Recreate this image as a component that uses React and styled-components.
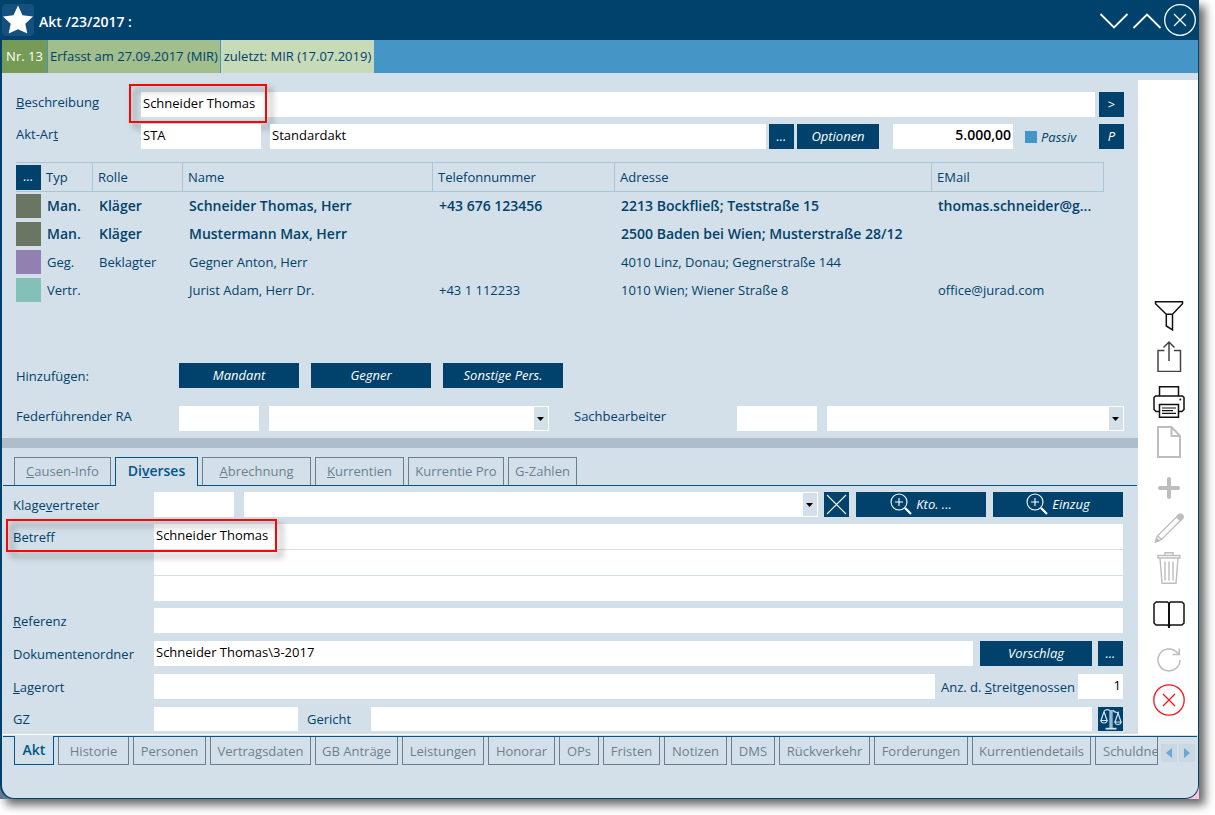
import React from 'react';
import styled, { createGlobalStyle, css } from 'styled-components';

const c = {
  navy: '#00426b',
  panel: '#d4e0e9',
  strip: '#4596c6',
  line: '#00568a',
  grid: '#abc5d6',
  tab: '#6b808f',
  splitter: '#aebdcb',
};

const GlobalStyle = createGlobalStyle`
  *, *::before, *::after { box-sizing: border-box; }
  body { margin: 0; background: #fff; }
  body, button, input, select {
    font-family: "Open Sans", "Noto Sans", sans-serif;
    font-size: 13px;
    line-height: 18px;
    color: ${c.navy};
  }
`;

const strong = css`
  font-size: 14px;
  font-weight: 600;
`;

const Desktop = styled.div`
  padding: 0 16px 16px 0;
  overflow: hidden;
`;

const Shadow = styled.div`
  box-shadow: 6px 6px 9px rgba(0, 0, 0, 0.6);
  background: linear-gradient(to right, #5f7a92 50%, #fcc4e0 50%);
`;

const Window = styled.main`
  display: flex;
  flex-direction: column;
  min-height: calc(100vh - 16px);
  background: ${c.panel};
  border: solid ${c.navy};
  border-width: 0 1px 1px 2px;
  border-radius: 0 0 14px 14px;
  overflow: hidden;
`;

const TitleBar = styled.header`
  display: flex;
  align-items: center;
  height: 40px;
  padding-right: 2px;
  gap: 1px;
  background: ${c.navy};
`;

const StarBox = styled.span`
  display: flex;
  width: 32px;
  height: 32px;
  border-radius: 4px;
  background: #14517e;
`;

const Title = styled.h1`
  flex: 1;
  margin: 0;
  padding: 4px 0 0 4px;
  line-height: 18px;
  color: #fff;
  ${strong}
`;

const IconButton = styled.button`
  display: flex;
  width: 32px;
  height: 32px;
  padding: 0;
  border: 0;
  background: none;
`;

const InfoStrip = styled.div`
  display: flex;
  gap: 1px;
  height: 33px;
  background: ${c.strip};
`;

const InfoCell = styled.span`
  display: flex;
  align-items: center;
  justify-content: center;
  width: ${(p) => p.$w}px;
  padding-bottom: 2px;
  background: ${(p) => p.$bg};
  color: ${(p) => p.$color || c.navy};
  white-space: nowrap;
`;

const Body = styled.div`
  display: flex;
  flex: 1;
`;

const Content = styled.div`
  display: flex;
  flex-direction: column;
  flex: 1;
  min-width: 0;
`;

const UpperPane = styled.section`
  display: flex;
  flex-direction: column;
  flex: 1;
  padding: 19px 14px 7px;
`;

const LowerPane = styled.section`
  padding: 6px 15px 3px 11px;
`;

const Stack = styled.div`
  display: flex;
  flex-direction: column;
  gap: ${(p) => p.$gap}px;
  margin-top: ${(p) => p.$top || 0}px;
`;

const Row = styled.div`
  display: flex;
  position: relative;
  gap: ${(p) => p.$gap || 0}px;
  min-height: ${(p) => p.$h || 25}px;
`;

const Label = styled.label`
  display: flex;
  align-items: center;
  flex: none;
  width: ${(p) => p.$w}px;
  padding-bottom: ${(p) => (p.$raised ? 6 : 0)}px;
  padding-left: ${(p) => p.$pad || 0}px;
  white-space: pre;
`;

const Field = styled.input`
  ${(p) => (p.$w ? css`flex: none; width: ${p.$w}px;` : css`flex: 1; width: 0;`)}
  min-width: 0;
  padding: 0 2px 4px;
  border: 0;
  border-radius: 0;
  background: #fff;
  color: #000;
  text-align: ${(p) => (p.$right ? 'right' : 'left')};
  ${(p) => p.$bold && strong}
`;

const FieldHolder = styled.div`
  display: flex;
  flex: 1;
  position: relative;
`;

const SelectBox = styled.div`
  display: flex;
  position: relative;
  ${(p) => (p.$w ? css`flex: none; width: ${p.$w}px;` : css`flex: 1;`)}
  border: 1px solid #fff;
  background: #fff;
`;

const Select = styled.select`
  flex: 1;
  appearance: none;
  border: 0;
  background: #fff;
  color: #000;
`;

const Arrow = styled.span`
  display: flex;
  align-items: center;
  justify-content: center;
  position: absolute;
  top: 0;
  right: 0;
  bottom: 0;
  width: 14px;
  padding-right: 1px;
  background: ${c.panel};
  pointer-events: none;
`;

const Button = styled.button`
  display: flex;
  align-items: center;
  justify-content: center;
  flex: none;
  gap: 4px;
  width: ${(p) => p.$w || 25}px;
  min-height: ${(p) => p.$h || 25}px;
  padding: 0 0 ${(p) => (p.$icon ? 0 : 2)}px;
  border: 0;
  background: ${c.navy};
  color: #fff;
  font-style: ${(p) => (p.$upright ? 'normal' : 'italic')};
`;

const Check = styled.label`
  display: flex;
  align-items: center;
  gap: 4px;
  width: 74px;
  font-style: italic;
`;

const Tick = styled.input`
  appearance: none;
  width: 12px;
  height: 12px;
  margin: 0;
  background: ${c.strip};
`;

const Spacer = styled.span`
  flex: none;
  width: ${(p) => p.$w}px;
`;

const Callout = styled.span`
  position: absolute;
  left: ${(p) => p.$x}px;
  top: ${(p) => p.$y}px;
  width: ${(p) => p.$w}px;
  height: ${(p) => p.$h}px;
  border: 2px solid #f90606;
  filter: drop-shadow(5px 5px 3px rgba(0, 0, 0, 0.45));
  pointer-events: none;
`;

const PartyArea = styled.div`
  flex: 1;
  padding: 13px 20px 16px 0;
`;

const Parties = styled.table`
  width: 100%;
  table-layout: fixed;
  border-spacing: 0;

  th, td {
    padding: 0;
    text-align: left;
    white-space: nowrap;
    overflow: hidden;
  }
  th {
    height: 30px;
    padding-left: 5px;
    font-weight: 400;
    border: solid ${c.grid};
    border-width: 1px 1px 1px 0;
  }
  th:first-child {
    padding-left: 0;
    border-right: 0;
  }
  td { height: 28px; padding-left: 6px; }
  td:first-child { padding: 2px 0; }
`;

const PartyRow = styled.tr`
  ${(p) => p.$bold && strong}
`;

const Swatch = styled.span`
  display: block;
  height: 24px;
  background: ${(p) => p.$bg};
`;

const Splitter = styled.hr`
  width: 100%;
  height: 10px;
  margin: 0;
  border: 0;
  background: ${c.splitter};
`;

const TabBar = styled.div`
  display: flex;
  gap: 4px;
  height: 29px;
  margin: 9px 1px 0;
  padding-left: 11px;
  border-bottom: 1px solid ${c.line};
`;

const Tab = styled.button`
  flex: none;
  width: ${(p) => p.$w}px;
  padding: 0;
  border: 1px solid ${c.tab};
  background: ${c.panel};
  color: ${c.tab};
  white-space: nowrap;
  overflow: hidden;
  ${(p) => p.$active && css`
    border-color: ${c.line};
    color: ${c.line};
    ${strong}
  `}
`;

const TopTab = styled(Tab)`
  height: ${(p) => (p.$active ? 29 : 28)}px;
  padding-bottom: 2px;
  border-bottom: 0;
`;

const BottomTab = styled(Tab)`
  height: ${(p) => (p.$active ? 29 : 28)}px;
  margin-top: ${(p) => (p.$active ? -1 : 0)}px;
  border-top: 0;
  ${(p) => p.$cut && css`
    padding-left: 7px;
    text-align: left;
  `}
`;

const Lines = styled.div`
  display: flex;
  flex-direction: column;
  flex: 1;
  gap: 1px;
`;

const LineRow = styled.div`
  display: flex;
  height: 25px;
`;

const Tools = styled.aside`
  display: flex;
  flex-direction: column;
  align-items: center;
  justify-content: flex-end;
  flex: none;
  gap: 14px;
  width: 60px;
  margin-top: 7px;
  padding: 18px 0;
  background: #fff;
`;

const ToolGroup = styled.div`
  display: flex;
  flex-direction: column;
  gap: 8px;
  padding-left: 2px;
`;

const Footer = styled.footer`
  min-height: 64px;
  padding: 1px 1px 0;
  border-top: 1px solid #fff;
`;

const BottomBar = styled.nav`
  display: flex;
  gap: 4px;
  padding-left: 11px;
  border-top: 1px solid ${c.line};
`;

const Scrollers = styled.div`
  display: flex;
  gap: 2px;
  margin: 7px 0 0 -1px;
`;

const Scroller = styled.button`
  display: flex;
  align-items: center;
  justify-content: center;
  width: 16px;
  height: 18px;
  padding: 0;
  border: 0;
  background: #c9d8e3;
`;

const Svg = ({ size = 32, stroke = '#111', width = 1.5, children, ...rest }) => (
  <svg width={size} height={size} viewBox={`0 0 ${size} ${size}`} fill="none" stroke={stroke} strokeWidth={width} aria-hidden="true" {...rest}>
    {children}
  </svg>
);

const grey = '#bdbdbd';

const toolGroups = [
  [
    ['Filter', <Svg key="i"><path d="M2.5 1.7h27v2L19.500 14.300v15.500L13.3 26V14.3L2.5 3.7zM13.3 14.3h6.200" /></Svg>],
    ['Teilen', <Svg key="i" stroke="#444"><path d="M11.5 10.5H5v21h22.5v-21H21M16 21V2M10.5 7.5L16 2l5.5 5.5" /></Svg>],
  ],
  [
    ['Drucken', (
      <Svg key="i">
        <path d="M6.5 10V.8h19V10M6.5 25.5H3L1 23.5v-12L2.5 10h27l1.5 1.5v12l-2 2h-3.5" />
        <path d="M6.5 18.5h19v12.7h-19z" />
        <path d="M9 22h14M9 24.6h11M9 27.3h14" strokeWidth="1.2" />
        <circle cx="27.3" cy="13.4" r="1" fill="#111" stroke="none" />
      </Svg>
    )],
    ['Neu', <Svg key="i" stroke={grey} width="2"><path d="M5 1h13.500l8.500 9v21H5zM18.500 1v9H27" /></Svg>],
  ],
  [
    ['Hinzufügen', <Svg key="i" stroke={grey} width="4"><path d="M16 7v18M7 16h18" strokeLinecap="round" /></Svg>],
    ['Bearbeiten', (
      <Svg key="i" stroke={grey} width="1.3">
        <path d="M2.500 29.800l2-6L25.500 3q2-1.800 3.700 0t.3 3.500L8.500 27.500zM4.500 23.800l4 3.700M23.500 5l4 4" />
        <path d="M25.500 3q2-1.800 3.700 0t.3 3.500l-1.500 1.500-4-3.500zM2.500 29.800l1-3.300 2.500 2.200z" fill={grey} />
      </Svg>
    )],
    ['Löschen', (
      <Svg key="i" stroke={grey} width="1.4">
        <path d="M5 3.500h22v2.500H5zM12 3.500V.8h8v2.700M7 6l2 25.200h14L25 6M12 9.500v19M16 9.500v19M20 9.500v19" />
      </Svg>
    )],
  ],
  [
    ['Buch', <Svg key="i"><path d="M16 5.500L14.500 4H3L1 6v19l2 2h11.500L16 28.500 17.500 27H29l2-2V6l-2-2H17.500z" /><path d="M16 5v25" strokeWidth="2" /></Svg>],
  ],
  [
    ['Aktualisieren', <Svg key="i" stroke={grey}><path d="M27 16A11 11 0 1 1 23.800 8.200L26 10.400M26.300 4.500v6H19.500" /></Svg>],
    ['Schließen', <Svg key="i" stroke="#f5141c" width="1.3"><circle cx="16" cy="16" r="15.200" /><path d="M10 10l12 12M22 10L10 22" /></Svg>],
  ],
];

const parties = [
  ['#6a7564', true, 'Man.', 'Kläger', 'Schneider Thomas, Herr', '+43 676 123456', '2213 Bockfließ; Teststraße 15', 'thomas.schneider@g...'],
  ['#6a7564', true, 'Man.', 'Kläger', 'Mustermann Max, Herr', '', '2500 Baden bei Wien; Musterstraße 28/12', ''],
  ['#9280b3', false, 'Geg.', 'Beklagter', 'Gegner Anton, Herr', '', '4010 Linz, Donau; Gegnerstraße 144', ''],
  ['#82c0b8', false, 'Vertr.', '', 'Jurist Adam, Herr Dr.', '+43 1 112233', '1010 Wien; Wiener Straße 8', 'office@jurad.com'],
];

const topTabs = [
  [97, <><u>C</u>ausen-Info</>],
  [83, <>Di<u>v</u>erses</>],
  [109, <><u>A</u>brechnung</>],
  [89, <><u>K</u>urrentien</>],
  [96, 'Kurrentie Pro'],
  [69, 'G-Zahlen'],
];

const bottomTabs = [
  [40, 'Akt'], [71, 'Historie'], [73, 'Personen'], [101, 'Vertragsdaten'], [83, 'GB Anträge'],
  [82, 'Leistungen'], [67, 'Honorar'], [40, 'OPs'], [57, 'Fristen'], [63, 'Notizen'], [44, 'DMS'],
  [91, 'Rückverkehr'], [94, 'Forderungen'], [119, 'Kurrentiendetails'], [63, 'Schuldne'],
];

const DropDown = ({ w, label }) => (
  <SelectBox $w={w}>
    <Select aria-label={label}><option></option></Select>
    <Arrow><svg width="7" height="4" aria-hidden="true"><path d="M0 0h7L3.500 4z" fill="#000" /></svg></Arrow>
  </SelectBox>
);

const Magnifier = () => (
  <Svg size={22} stroke="#fff" width="1.1">
    <circle cx="9" cy="9" r="8" /><path d="M9 5v8M5 9h8" /><path d="M15 15l6 6" strokeWidth="2.2" />
  </Svg>
);

export default function App() {
  return (
    <Desktop>
      <GlobalStyle />
      <Shadow>
        <Window>
          <TitleBar>
            <StarBox>
              <svg width="32" height="32" viewBox="0 0 32 32" aria-hidden="true">
                <path d="M16 1.500l4.500 9.700 10.500 1.300-7.700 7.300 2 9.700-9.300-4.300-9.300 4.300 2-9.700L1 12.500l10.500-1.300z" fill="#fff" />
              </svg>
            </StarBox>
            <Title>Akt /23/2017 :</Title>
            <IconButton aria-label="Nächster"><Svg stroke="#fff" width="1.8"><path d="M2.500 10L16 23.500 29.500 10" /></Svg></IconButton>
            <IconButton aria-label="Voriger"><Svg stroke="#fff" width="1.8"><path d="M2.500 24L16 10.500 29.500 24" /></Svg></IconButton>
            <IconButton aria-label="Fenster schließen"><Svg stroke="#fff" width="1.3"><circle cx="16" cy="16" r="15.300" /><path d="M10 10l12 12M22 10L10 22" /></Svg></IconButton>
          </TitleBar>
          <InfoStrip>
            <InfoCell $w={45} $bg="#769b57" $color="#fff">Nr. 13</InfoCell>
            <InfoCell $w={172} $bg="#a1be8c">Erfasst am 27.09.2017 (MIR)</InfoCell>
            <InfoCell $w={153} $bg="#c8dbb9">zuletzt: MIR (17.07.2019)</InfoCell>
          </InfoStrip>
          <Body>
            <Content>
              <UpperPane>
                <Stack $gap={7}>
                  <Row $gap={4}>
                    <FieldHolder>
                      <Label htmlFor="beschreibung" $w={125} $raised><u>B</u>eschreibung</Label>
                      <Field id="beschreibung" defaultValue="Schneider Thomas" />
                      <Callout $x={113} $y={-8} $w={138} $h={39} />
                    </FieldHolder>
                    <Button $upright>&gt;</Button>
                  </Row>
                  <Row>
                    <Label htmlFor="aktart" $w={125} $raised>Akt-Ar<u>t</u></Label>
                    <Field id="aktart" $w={120} defaultValue="STA" />
                    <Spacer $w={9} />
                    <Field aria-label="Akt-Art Bezeichnung" defaultValue="Standardakt" />
                    <Spacer $w={3} />
                    <Button>...</Button>
                    <Spacer $w={3} />
                    <Button $w={82}>Optionen</Button>
                    <Spacer $w={14} />
                    <Field $w={120} $right $bold aria-label="Streitwert" defaultValue="5.000,00" />
                    <Spacer $w={12} />
                    <Check><Tick type="checkbox" />Passiv</Check>
                    <Button>P</Button>
                  </Row>
                </Stack>
                <PartyArea>
                  <Parties>
                    <colgroup>
                      <col width="25" /><col width="52" /><col width="90" /><col width="250" />
                      <col width="182" /><col /><col width="172" />
                    </colgroup>
                    <thead>
                      <tr>
                        <th><Button aria-label="Personen auswählen">...</Button></th>
                        <th>Typ</th><th>Rolle</th><th>Name</th><th>Telefonnummer</th><th>Adresse</th><th>EMail</th>
                      </tr>
                    </thead>
                    <tbody>
                      {parties.map(([color, bold, ...cells]) => (
                        <PartyRow key={cells[2]} $bold={bold}>
                          <td><Swatch $bg={color} /></td>
                          {cells.map((text, i) => <td key={i}>{text}</td>)}
                        </PartyRow>
                      ))}
                    </tbody>
                  </Parties>
                </PartyArea>
                <Stack $gap={18}>
                  <Row $gap={12}>
                    <Label as="span" $w={151}>Hinzufügen:</Label>
                    <Button $w={120}>Mandant</Button>
                    <Button $w={120}>Gegner</Button>
                    <Button $w={120}>Sonstige Pers.</Button>
                  </Row>
                  <Row>
                    <Label htmlFor="ra" $w={163} $raised>Federführender RA</Label>
                    <Field id="ra" $w={80} />
                    <Spacer $w={10} />
                    <DropDown w={280} label="Federführender RA Name" />
                    <Spacer $w={25} />
                    <Label htmlFor="sb" $w={163} $raised>Sachbearbeiter</Label>
                    <Field id="sb" $w={80} />
                    <Spacer $w={10} />
                    <DropDown label="Sachbearbeiter Name" />
                  </Row>
                </Stack>
              </UpperPane>
              <Splitter />
              <TabBar>
                {topTabs.map(([w, text], i) => <TopTab key={i} $w={w} $active={i === 1}>{text}</TopTab>)}
              </TabBar>
              <LowerPane>
                <Stack $gap={7}>
                  <Row>
                    <Label htmlFor="kv" $w={141}>Klage<u>v</u>ertreter</Label>
                    <Field id="kv" $w={80} />
                    <Spacer $w={10} />
                    <DropDown label="Klagevertreter Name" />
                    <Spacer $w={6} />
                    <Button $icon aria-label="Leeren"><Svg size={25} stroke="#fff" width="1.1"><path d="M3 3l19 19M22 3L3 22" /></Svg></Button>
                    <Spacer $w={7} />
                    <Button $w={130}><Magnifier />Kto. ...</Button>
                    <Spacer $w={7} />
                    <Button $w={130}><Magnifier />Einzug</Button>
                  </Row>
                  <Row>
                    <Lines>
                      <LineRow>
                        <Label htmlFor="betreff" $w={141}>Betreff</Label>
                        <Field id="betreff" defaultValue="Schneider Thomas" />
                      </LineRow>
                      <LineRow><Spacer $w={141} /><Field aria-label="Betreff Zeile 2" /></LineRow>
                      <LineRow><Spacer $w={141} /><Field aria-label="Betreff Zeile 3" /></LineRow>
                    </Lines>
                    <Callout $x={-7} $y={-5} $w={271} $h={33} />
                  </Row>
                  <Row>
                    <Label htmlFor="ref" $w={141}><u>R</u>eferenz</Label>
                    <Field id="ref" />
                  </Row>
                </Stack>
                <Stack $gap={8} $top={8}>
                  <Row>
                    <Label htmlFor="ordner" $w={141}>Dokumentenordner</Label>
                    <Field id="ordner" defaultValue="Schneider Thomas\3-2017" />
                    <Spacer $w={7} />
                    <Button $w={112}>Vorschlag</Button>
                    <Spacer $w={6} />
                    <Button>...</Button>
                  </Row>
                  <Row>
                    <Label htmlFor="lager" $w={141}><u>L</u>agerort</Label>
                    <Field id="lager" />
                    <Label htmlFor="anz" $w={143} $pad={6}>Anz. d. <u>S</u>treitgenossen</Label>
                    <Field id="anz" $w={45} $right defaultValue="1" />
                  </Row>
                  <Row $h={24}>
                    <Label htmlFor="gz" $w={141}>GZ</Label>
                    <Field id="gz" $w={144} />
                    <Label htmlFor="gericht" $w={73} $pad={9}>Gericht</Label>
                    <Field id="gericht" />
                    <Spacer $w={6} />
                    <Button $icon $h={24} aria-label="Gericht suchen">
                      <Svg size={22} stroke="#d3e3ee" width="1.2">
                        <path d="M4 3q3-2.500 6-.5h3q3 3 6 1.500M4 3.500L1 12.500M4 3.500l3 9M18 5l-3 9M18 5l3 9" />
                        <path d="M.8 12.500h6.400q-.5 2.500-3.200 2.500T.8 12.500zM14.800 14h6.400q-.5 2.500-3.200 2.500T14.800 14z" />
                        <path d="M11 2v18" stroke="#9dbbd0" strokeWidth="3.400" />
                        <path d="M5.500 20.700h11" strokeWidth="1.800" />
                      </Svg>
                    </Button>
                  </Row>
                </Stack>
              </LowerPane>
            </Content>
            <Tools>
              {toolGroups.map((group, i) => (
                <ToolGroup key={i}>
                  {group.map(([name, icon]) => <IconButton key={name} aria-label={name}>{icon}</IconButton>)}
                </ToolGroup>
              ))}
            </Tools>
          </Body>
          <Footer>
            <BottomBar>
              {bottomTabs.map(([w, text], i) => (
                <BottomTab key={text} $w={w} $active={i === 0} $cut={i === bottomTabs.length - 1}>{text}</BottomTab>
              ))}
              <Scrollers>
                <Scroller aria-label="Zurück"><svg width="6" height="10" aria-hidden="true"><path d="M6 0v10L0 5z" fill="#6aa7d2" /></svg></Scroller>
                <Scroller aria-label="Weiter"><svg width="6" height="10" aria-hidden="true"><path d="M0 0v10l6-5z" fill="#6aa7d2" /></svg></Scroller>
              </Scrollers>
            </BottomBar>
          </Footer>
        </Window>
      </Shadow>
    </Desktop>
  );
}
